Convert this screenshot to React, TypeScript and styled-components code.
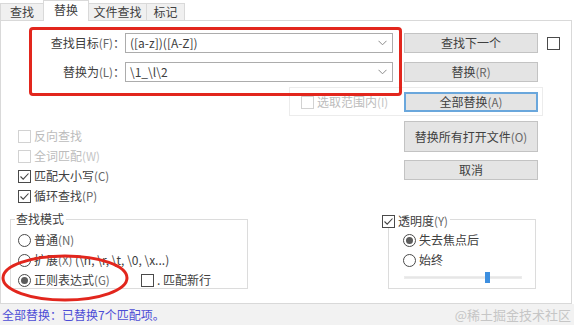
import React from "react";
import styled, { createGlobalStyle, css } from "styled-components";

const GlobalStyle = createGlobalStyle`
  html, body {
    margin: 0;
    padding: 0;
    background: #ffffff;
  }
  body {
    font-family: "Noto Sans CJK SC", "Noto Sans", sans-serif;
    font-size: 12px;
    color: #404040;
  }
`;

const Key = ({ k }: { k: string }) => <Accel>({k})</Accel>;

const CheckBox = ({
  checked,
  disabled,
}: {
  checked?: boolean;
  disabled?: boolean;
}) => (
  <Box $disabled={disabled}>
    {checked && (
      <svg width="11" height="11" viewBox="0 0 11 11">
        <path d="M1.5 5.5 L4.2 8.2 L9.5 2.5" fill="none" stroke="#444" strokeWidth="1.1" />
      </svg>
    )}
  </Box>
);

const Radio = ({ checked }: { checked?: boolean }) => (
  <Circle>{checked && <Dot />}</Circle>
);

const Chevron = () => (
  <svg width="9" height="6" viewBox="0 0 9 6">
    <path d="M0.5 0.8 L4.5 4.8 L8.5 0.8" fill="none" stroke="#8a8a8a" strokeWidth="1" />
  </svg>
);

const App = () => {
  const opacity = 0.7;

  return (
    <Page>
      <GlobalStyle />
      <TabStrip>
        <Tab $w={43}>查找</Tab>
        <Tab $w={45} $active>
          替换
        </Tab>
        <Tab $w={58}>文件查找</Tab>
        <Tab $w={38}>标记</Tab>
      </TabStrip>

      <Panel>
        <FieldRow $top={12}>
          <FieldLabel>
            查找目标<Key k="F" />：
          </FieldLabel>
          <Combo>
            <span>([a-z])([A-Z])</span>
            <Chevron />
          </Combo>
          <Button>查找下一个</Button>
          <SideCheck>
            <CheckBox />
          </SideCheck>
        </FieldRow>

        <FieldRow $top={9}>
          <FieldLabel>
            替换为<Key k="L" />：
          </FieldLabel>
          <Combo>
            <span>\1_\l\2</span>
            <Chevron />
          </Combo>
          <Button>
            替换<Key k="R" />
          </Button>
        </FieldRow>

        <ScopeBox>
          <Option>
            <CheckBox disabled />
            <OptionText $disabled>
              选取范围内<Key k="I" />
            </OptionText>
          </Option>
          <Button $default>
            全部替换<Key k="A" />
          </Button>
        </ScopeBox>

        <MidRow>
          <LeftCol>
            <Option $h={20}>
              <CheckBox disabled />
              <OptionText $disabled>反向查找</OptionText>
            </Option>
            <Option $h={20}>
              <CheckBox disabled />
              <OptionText $disabled>
                全词匹配<Key k="W" />
              </OptionText>
            </Option>
            <Option $h={20}>
              <CheckBox checked />
              <OptionText>
                匹配大小写<Key k="C" />
              </OptionText>
            </Option>
            <Option $h={20}>
              <CheckBox checked />
              <OptionText>
                循环查找<Key k="P" />
              </OptionText>
            </Option>
          </LeftCol>
          <RightCol>
            <Button $h={31}>
              替换所有打开文件<Key k="O" />
            </Button>
            <Button>取消</Button>
          </RightCol>
        </MidRow>

        <BottomRow>
          <GroupBox $left={9} $w={238}>
            <GroupTitle>查找模式</GroupTitle>
            <GroupBody $padLeft={7}>
              <Option $h={20}>
                <Radio />
                <OptionText>
                  普通<Key k="N" />
                </OptionText>
              </Option>
              <Option $h={20}>
                <Radio />
                <OptionText>
                  扩展<Key k="X" /> (\n, \r, \t, \0, \x...)
                </OptionText>
              </Option>
              <Option $h={20}>
                <Option $w={123}>
                  <Radio checked />
                  <OptionText>
                    正则表达式<Key k="G" />
                  </OptionText>
                </Option>
                <CheckBox />
                <OptionText>. 匹配新行</OptionText>
              </Option>
            </GroupBody>
          </GroupBox>

          <GroupBox $left={140} $w={148}>
            <GroupTitle $checkTitle>
              <CheckBox checked />
              <OptionText>
                透明度<Key k="Y" />
              </OptionText>
            </GroupTitle>
            <GroupBody $padLeft={14}>
              <Option $h={20}>
                <Radio checked />
                <OptionText>失去焦点后</OptionText>
              </Option>
              <Option $h={20}>
                <Radio />
                <OptionText>始终</OptionText>
              </Option>
              <Track>
                <Thumb style={{ left: `${opacity * 100}%` }} />
              </Track>
            </GroupBody>
          </GroupBox>
        </BottomRow>
      </Panel>

      <StatusBar>
        <StatusText>全部替换：已替换7个匹配项。</StatusText>
        <Watermark>@稀土掘金技术社区</Watermark>
      </StatusBar>

      <RedFrame />
      <RedEllipse width="128" height="48" viewBox="0 0 128 48">
        <ellipse cx="64" cy="24" rx="62" ry="22" fill="none" stroke="#e2261d" strokeWidth="3" />
      </RedEllipse>
    </Page>
  );
};

export default App;

const Page = styled.div`
  position: relative;
  width: 574px;
  height: 325px;
  overflow: hidden;
  display: flex;
  flex-direction: column;
  background: #ffffff;
`;

const TabStrip = styled.div`
  display: flex;
  align-items: flex-end;
  height: 20px;
`;

const Tab = styled.div<{ $w: number; $active?: boolean }>`
  box-sizing: border-box;
  width: ${(p) => p.$w + 1}px;
  margin-right: -1px;
  height: 17px;
  border: 1px solid #d9d9d9;
  border-bottom: none;
  background: #f0f0f0;
  display: flex;
  align-items: center;
  justify-content: center;
  font-size: 12px;
  line-height: 14px;
  color: #404040;

  ${(p) =>
    p.$active &&
    css`
      height: 21px;
      margin-bottom: -1px;
      background: #ffffff;
      position: relative;
      z-index: 1;
      padding-bottom: 3px;
    `}
`;

const Panel = styled.div`
  box-sizing: border-box;
  width: 572px;
  height: 284px;
  border: 1px solid #d9d9d9;
  display: flex;
  flex-direction: column;
`;

const FieldRow = styled.div<{ $top: number }>`
  display: flex;
  align-items: center;
  height: 20px;
  margin-top: ${(p) => p.$top}px;
`;

const FieldLabel = styled.div`
  width: 124px;
  text-align: right;
  line-height: 16px;
  color: #404040;
`;

const Accel = styled.span`
  font-size: 11.5px;
  color: #666;
`;

const Combo = styled.div`
  box-sizing: border-box;
  width: 268px;
  height: 20px;
  border: 1px solid #acacac;
  background: #ffffff;
  display: flex;
  align-items: center;
  justify-content: space-between;
  padding: 0 5px 0 4px;
  line-height: 16px;
  color: #404040;
`;

const Button = styled.div<{ $h?: number; $default?: boolean }>`
  box-sizing: border-box;
  width: 134px;
  height: ${(p) => p.$h ?? 20}px;
  margin-left: 11px;
  border: 1px solid #c3c3c3;
  background: #e4e4e4;
  display: flex;
  align-items: center;
  justify-content: center;
  line-height: 16px;
  color: #404040;

  ${(p) =>
    p.$default &&
    css`
      border: 2px solid #6aa7dc;
      margin-left: auto;
    `}
`;

const SideCheck = styled.div`
  margin-left: 9px;
  display: flex;
`;

const Box = styled.span<{ $disabled?: boolean }>`
  box-sizing: border-box;
  flex: none;
  width: 13px;
  height: 13px;
  border: 1px solid ${(p) => (p.$disabled ? "#d2d2d2" : "#4a4a4a")};
  background: #ffffff;
  display: flex;
  align-items: center;
  justify-content: center;
`;

const Circle = styled.span`
  box-sizing: border-box;
  flex: none;
  width: 13px;
  height: 13px;
  border: 1px solid #4a4a4a;
  border-radius: 50%;
  background: #ffffff;
  display: flex;
  align-items: center;
  justify-content: center;
`;

const Dot = styled.span`
  width: 7px;
  height: 7px;
  border-radius: 50%;
  background: #5c5c5c;
`;

const Option = styled.div<{ $h?: number; $w?: number }>`
  display: flex;
  align-items: center;
  ${(p) => p.$h && `height: ${p.$h}px;`}
  ${(p) => p.$w && `width: ${p.$w}px;`}
`;

const OptionText = styled.span<{ $disabled?: boolean }>`
  margin-left: 3px;
  line-height: 16px;
  white-space: nowrap;
  color: ${(p) => (p.$disabled ? "#bcbcbc" : "#404040")};

  ${Accel} {
    color: ${(p) => (p.$disabled ? "#c4c4c4" : "#666")};
  }
`;

const ScopeBox = styled.div`
  box-sizing: border-box;
  margin: 5px 0 0 288px;
  width: 254px;
  height: 29px;
  border: 1px solid #ececec;
  padding: 4px 4px 3px 11px;
  display: flex;
  align-items: center;
`;

const MidRow = styled.div`
  display: flex;
  justify-content: space-between;
  align-items: flex-start;
`;

const LeftCol = styled.div`
  margin-top: 10px;
  padding-left: 17px;
  display: flex;
  flex-direction: column;
`;

const RightCol = styled.div`
  margin: 5px 33px 0 0;
  display: flex;
  flex-direction: column;
  gap: 8px;

  ${Button} {
    margin-left: 0;
  }
`;

const BottomRow = styled.div`
  display: flex;
  align-items: flex-start;
  margin-top: 13px;
`;

const GroupBox = styled.div<{ $left: number; $w: number }>`
  position: relative;
  box-sizing: border-box;
  margin-left: ${(p) => p.$left}px;
  width: ${(p) => p.$w}px;
  height: 70px;
  border: 1px solid #dcdcdc;
`;

const GroupTitle = styled.div<{ $checkTitle?: boolean }>`
  position: absolute;
  top: -8px;
  left: 4px;
  height: 14px;
  padding: 0 2px 0 1px;
  background: #ffffff;
  line-height: 14px;
  display: flex;
  align-items: center;
  color: #404040;

  ${(p) =>
    p.$checkTitle &&
    css`
      top: -6px;
      left: -7px;
      padding: 0 2px 0 0;
    `}
`;

const GroupBody = styled.div<{ $padLeft: number }>`
  padding: 10px 0 0 ${(p) => p.$padLeft}px;
  display: flex;
  flex-direction: column;
`;

const Track = styled.div`
  position: relative;
  margin: 6px 0 0 1px;
  width: 118px;
  height: 3px;
  background: #e6e6e6;
  border: 1px solid #ececec;
  box-sizing: border-box;
`;

const Thumb = styled.span`
  position: absolute;
  top: -5px;
  width: 5px;
  height: 11px;
  margin-left: -1px;
  background: #3d8fe0;
`;

const StatusBar = styled.div`
  flex: 1;
  display: flex;
  align-items: center;
  justify-content: space-between;
  background: #f2f2f2;
  padding: 0 2px;
`;

const StatusText = styled.span`
  color: #4c4cd6;
  font-size: 12px;
  line-height: 16px;
`;

const Watermark = styled.span`
  color: #c6c6c6;
  font-size: 13px;
  line-height: 16px;
  margin-right: 1px;
`;

const RedFrame = styled.div`
  position: absolute;
  left: 29px;
  top: 27px;
  width: 373px;
  height: 69px;
  box-sizing: border-box;
  border: 3px solid #e2261d;
  border-radius: 4px;
  pointer-events: none;
`;

const RedEllipse = styled.svg`
  position: absolute;
  left: 1px;
  top: 254px;
  pointer-events: none;
`;
